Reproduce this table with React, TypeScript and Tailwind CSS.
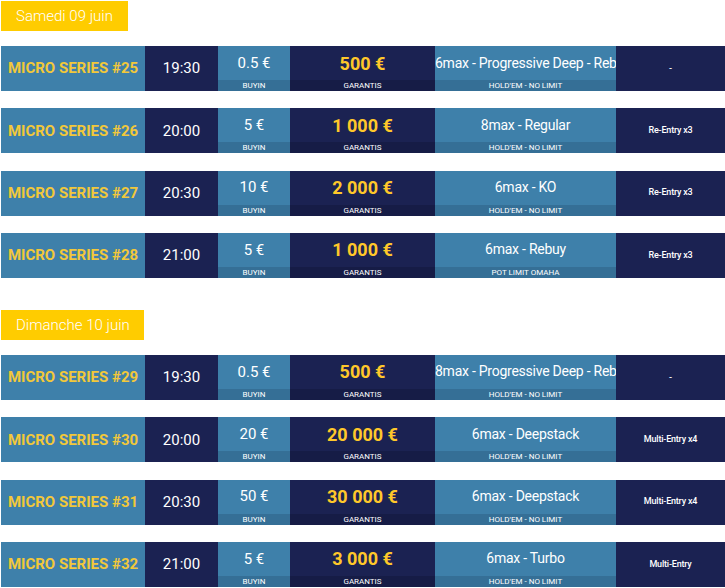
import React from 'react';

type Tournament = {
  name: string;
  time: string;
  buyin: string;
  guarantee: string;
  game: string;
  variant: string;
  entry: string;
};

type Day = { label: string; width: string; tournaments: Tournament[] };

const days: Day[] = [
  {
    label: 'Samedi 09 juin',
    width: 'w-[127px]',
    tournaments: [
      { name: 'MICRO SERIES #25', time: '19:30', buyin: '0.5 €', guarantee: '500 €', game: '6max - Progressive Deep - Rebuy', variant: "HOLD'EM - NO LIMIT", entry: '-' },
      { name: 'MICRO SERIES #26', time: '20:00', buyin: '5 €', guarantee: '1 000 €', game: '8max - Regular', variant: "HOLD'EM - NO LIMIT", entry: 'Re-Entry x3' },
      { name: 'MICRO SERIES #27', time: '20:30', buyin: '10 €', guarantee: '2 000 €', game: '6max - KO', variant: "HOLD'EM - NO LIMIT", entry: 'Re-Entry x3' },
      { name: 'MICRO SERIES #28', time: '21:00', buyin: '5 €', guarantee: '1 000 €', game: '6max - Rebuy', variant: 'POT LIMIT OMAHA', entry: 'Re-Entry x3' },
    ],
  },
  {
    label: 'Dimanche 10 juin',
    width: 'w-[143px]',
    tournaments: [
      { name: 'MICRO SERIES #29', time: '19:30', buyin: '0.5 €', guarantee: '500 €', game: '8max - Progressive Deep - Rebuy', variant: "HOLD'EM - NO LIMIT", entry: '-' },
      { name: 'MICRO SERIES #30', time: '20:00', buyin: '20 €', guarantee: '20 000 €', game: '6max - Deepstack', variant: "HOLD'EM - NO LIMIT", entry: 'Multi-Entry x4' },
      { name: 'MICRO SERIES #31', time: '20:30', buyin: '50 €', guarantee: '30 000 €', game: '6max - Deepstack', variant: "HOLD'EM - NO LIMIT", entry: 'Multi-Entry x4' },
      { name: 'MICRO SERIES #32', time: '21:00', buyin: '5 €', guarantee: '3 000 €', game: '6max - Turbo', variant: "HOLD'EM - NO LIMIT", entry: 'Multi-Entry' },
    ],
  },
];

function Row({ t }: { t: Tournament }) {
  return (
    <div className="flex h-[45px] text-white">
      <div className="w-[144px] flex items-center justify-center bg-[#3e80aa] text-[15px] font-bold text-[#f2c83a] whitespace-nowrap">
        {t.name}
      </div>
      <div className="w-[73px] flex items-center justify-center bg-[#1b2252] text-[15px]">
        {t.time}
      </div>
      {/* buyin */}
      <div className="w-[72px] flex flex-col bg-[#3e80aa]">
        <div className="flex-1 flex items-center justify-center text-[15px]">{t.buyin}</div>
        <div className="h-[11px] bg-[#356f96] text-[8px] leading-[11px] text-center">BUYIN</div>
      </div>
      {/* garantis */}
      <div className="w-[145px] flex flex-col bg-[#1b2252]">
        <div className="flex-1 flex items-center justify-center text-[18px] font-bold text-[#ffc82a]">{t.guarantee}</div>
        <div className="h-[11px] bg-[#161c46] text-[8px] leading-[11px] text-center">GARANTIS</div>
      </div>
      {/* game: long names get clipped at the right edge */}
      <div className="w-[181px] flex flex-col bg-[#3e80aa] overflow-hidden">
        <div className="flex-1 flex items-center overflow-hidden">
          <div className="w-full text-center text-[14px] tracking-[-0.25px] whitespace-nowrap overflow-hidden">{t.game}</div>
        </div>
        <div className="h-[11px] bg-[#356f96] text-[8px] leading-[11px] text-center">{t.variant}</div>
      </div>
      <div className="flex-1 flex items-center justify-center bg-[#1b2252] text-[9px] font-medium tracking-[-0.2px]">
        {t.entry}
      </div>
    </div>
  );
}

export default function App() {
  return (
    <div className="w-[725px] h-[588px] overflow-hidden bg-white pl-px pt-px font-['Roboto',sans-serif]">
      {days.map((d, i) => (
        <section key={d.label} className={i > 0 ? 'mt-[32px]' : ''}>
          <div className={`${d.width} h-[30px] bg-[#ffcc00] text-white text-[15px] font-light flex items-center pl-[15px] whitespace-nowrap`}>
            {d.label}
          </div>
          <div className="mt-[15px] flex flex-col gap-[17.33px]">
            {d.tournaments.map(t => (
              <Row key={t.name} t={t} />
            ))}
          </div>
        </section>
      ))}
    </div>
  );
}
